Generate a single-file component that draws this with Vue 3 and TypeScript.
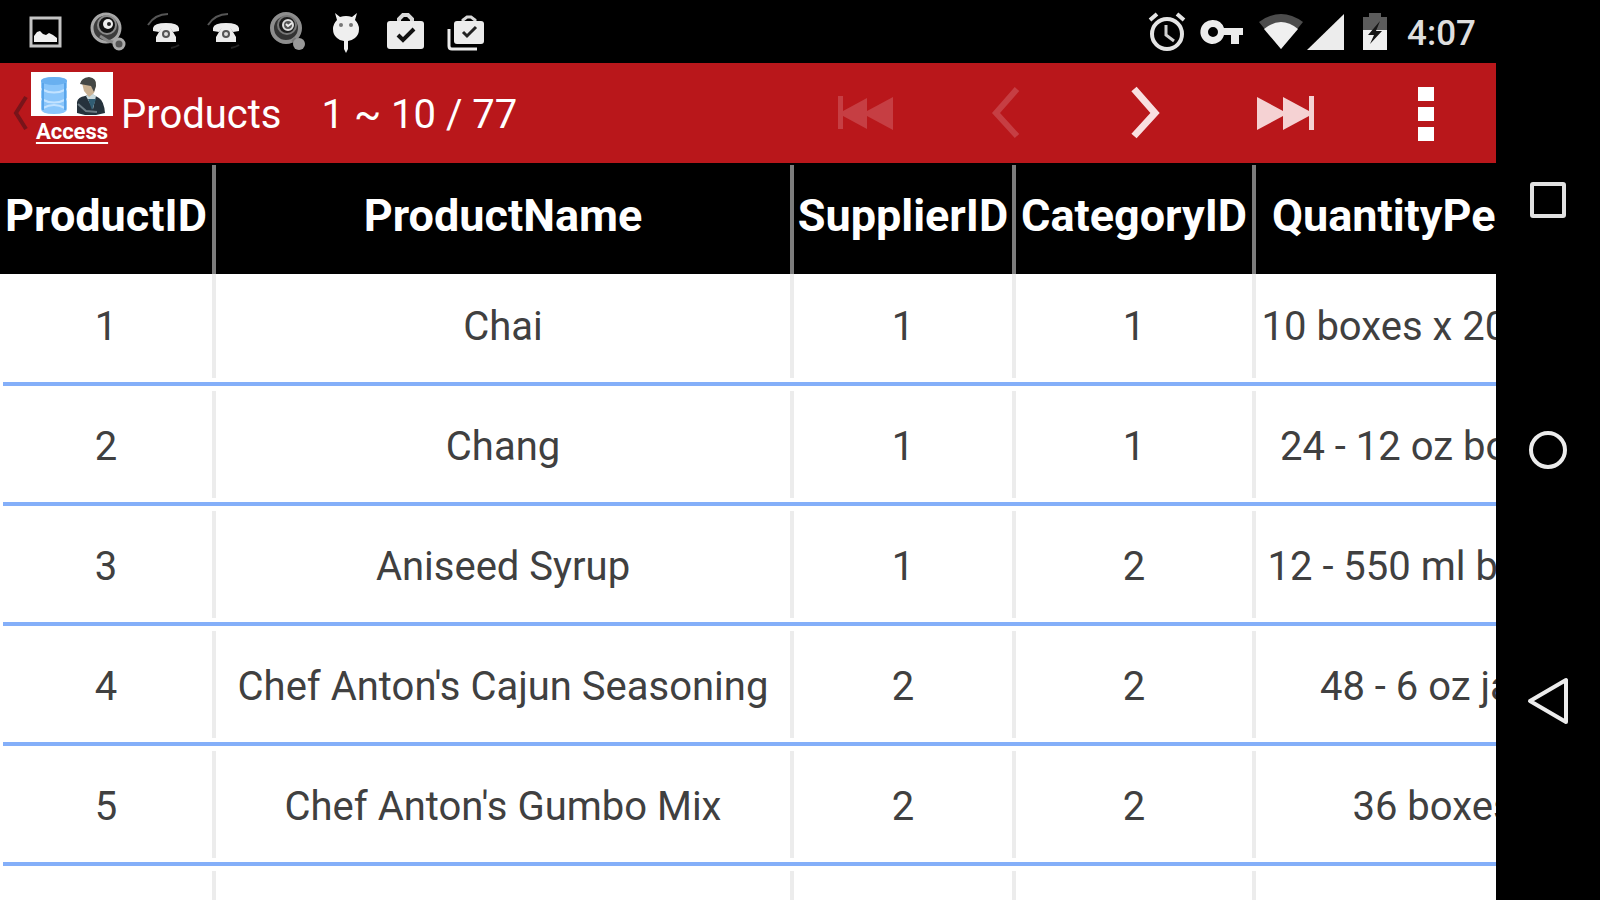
<script setup lang="ts">
interface Product {
  id: string
  name: string
  supplier: string
  category: string
  quantity: string
}

const columns: string[] = ['ProductID', 'ProductName', 'SupplierID', 'CategoryID', 'QuantityPerUnit']

const products: Product[] = [
  { id: '1', name: 'Chai', supplier: '1', category: '1', quantity: '10 boxes x 20 bags' },
  { id: '2', name: 'Chang', supplier: '1', category: '1', quantity: '24 - 12 oz bottles' },
  { id: '3', name: 'Aniseed Syrup', supplier: '1', category: '2', quantity: '12 - 550 ml bottles' },
  { id: '4', name: "Chef Anton's Cajun Seasoning", supplier: '2', category: '2', quantity: '48 - 6 oz jars' },
  { id: '5', name: "Chef Anton's Gumbo Mix", supplier: '2', category: '2', quantity: '36 boxes' },
  { id: '', name: '', supplier: '', category: '', quantity: '' },
]
</script>

<template>
  <div class="device">
    <div class="screen">
      <header class="status">
        <div class="notifications">
          <svg width="60" height="62" viewBox="0 0 60 62">
            <rect x="16" y="18" width="29" height="28" fill="none" stroke="#c4c4c4" stroke-width="3" />
            <path d="M19 42V36l3-4 3-1 3 3 3 1 3-2 4 2 4 3v4z" fill="#f0f0f0" />
          </svg>
          <svg width="60" height="62" viewBox="0 0 60 62">
            <circle cx="31" cy="28" r="14" fill="#3c3c3c" stroke="#a8a8a8" stroke-width="3" />
            <circle cx="32" cy="25" r="9" fill="#111" stroke="#8a8a8a" stroke-width="2" />
            <circle cx="33" cy="24" r="5" fill="#eee" />
            <circle cx="34" cy="24" r="2" fill="#222" />
            <path d="M25 36l8 5 9 2" fill="none" stroke="#888" stroke-width="3" />
            <circle cx="44" cy="44" r="5" fill="#555" stroke="#aaa" stroke-width="3" />
          </svg>
          <svg v-for="n in 2" :key="n" width="60" height="62" viewBox="0 0 60 62">
            <path d="M13 25q7-11 20-11" fill="none" stroke="#555" stroke-width="2" />
            <path d="M18 31v-3q1-5 13-5t13 5v3l-6 1-3-4h-8l-3 4z" fill="#ececec" />
            <path d="M27 27h8l6 10v5H21v-5z" fill="#ececec" />
            <circle cx="31" cy="34" r="4" fill="#555" />
            <circle cx="31" cy="34" r="2" fill="#ddd" />
            <path d="M36 48q5-1 8-3" fill="none" stroke="#222" stroke-width="2" />
          </svg>
          <svg width="60" height="62" viewBox="0 0 60 62">
            <circle cx="31" cy="28" r="14" fill="#333" stroke="#8e8e8e" stroke-width="4" />
            <circle cx="32" cy="25" r="9" fill="#1c1c1c" stroke="#777" stroke-width="2" />
            <circle cx="33" cy="25" r="5" fill="#555" stroke="#ddd" stroke-width="2" />
            <path d="M31 24l2 2 4-3" fill="none" stroke="#eee" stroke-width="2" />
            <path d="M38 39l4 4" stroke="#777" stroke-width="5" />
            <circle cx="44" cy="44" r="6" fill="#999" />
          </svg>
          <svg width="60" height="62" viewBox="0 0 60 62">
            <path d="M20 13l5 4q6-2 12 0l5-4-2 7q4 4 4 9 0 6-4 9-4 3-7 3v8l-2 4-2-4v-8q-4 0-7-3-4-3-4-9 0-5 4-9z" fill="#efefef" />
            <circle cx="26" cy="25" r="2" fill="#777" />
            <circle cx="36" cy="25" r="2" fill="#777" />
          </svg>
          <svg width="60" height="62" viewBox="0 0 60 62">
            <path d="M24 22v-3l4-4h5l4 4v3" fill="none" stroke="#d8d8d8" stroke-width="4" />
            <rect x="12" y="21" width="37" height="28" rx="3" fill="#ececec" />
            <path d="M23 35l5 5 11-11" fill="none" stroke="#111" stroke-width="4" />
          </svg>
          <svg width="60" height="62" viewBox="0 0 60 62">
            <path d="M14 29v17q0 3 3 3h25" fill="none" stroke="#ececec" stroke-width="3" />
            <path d="M28 23v-3l4-3h4l4 3v3" fill="none" stroke="#d8d8d8" stroke-width="3" />
            <rect x="19" y="21" width="30" height="23" rx="3" fill="#ececec" />
            <path d="M28 32l4 4 9-9" fill="none" stroke="#222" stroke-width="3" />
          </svg>
        </div>
        <div class="system">
          <svg width="52" height="62" viewBox="0 0 52 62">
            <circle cx="26" cy="34" r="15" fill="none" stroke="#e4e4e4" stroke-width="4" />
            <path d="M9 20l7-6M43 20l-7-6" stroke="#e4e4e4" stroke-width="4" />
            <path d="M25 25v10l8 6" fill="none" stroke="#d0d0d0" stroke-width="3" />
          </svg>
          <svg width="58" height="62" viewBox="0 0 58 62">
            <path fill-rule="evenodd" d="M20 20a12 12 0 0 1 11 8h19v7h-4v9h-8v-9h-7a12 12 0 1 1-11-15zm0 7a5 5 0 1 0 0 10 5 5 0 0 0 0-10z" fill="#ececec" />
          </svg>
          <svg width="54" height="62" viewBox="0 0 54 62">
            <path d="M8 22q22-16 44 0L30 49z" fill="#4c4c4c" />
            <path d="M13 29q17-14 34 0L30 49z" fill="#f0f0f0" />
          </svg>
          <svg width="48" height="62" viewBox="0 0 48 62">
            <path d="M2 50L39 14v36z" fill="#ececec" />
          </svg>
          <svg width="44" height="62" viewBox="0 0 44 62">
            <path d="M10 17h6v-4h12v4h6v13H10z" fill="#5c5c5c" />
            <path d="M10 30h24v20H10z" fill="#f0f0f0" />
            <path d="M27 21L15 35h6l-4 9 12-13h-6z" fill="#161616" />
          </svg>
          <time class="clock">4:07</time>
        </div>
      </header>

      <div class="toolbar">
        <button class="home" type="button" aria-label="Back">
          <svg class="up" width="18" height="40" viewBox="0 0 18 40">
            <path d="M15 4L5 20l10 16" fill="none" stroke="#78141a" stroke-width="4" />
          </svg>
          <span class="logo">
            <svg width="82" height="44" viewBox="0 0 82 44">
              <rect width="82" height="44" fill="#fff" />
              <path d="M10 9q0-4 13-4t13 4v28q0 5-13 5t-13-5z" fill="#8ac6fb" />
              <ellipse cx="23" cy="9" rx="13" ry="4" fill="#69b0f0" />
              <path d="M10 17q13 7 26 0M10 27q13 7 26 0M12 36q11-6 22 0" fill="none" stroke="#c2e2ff" stroke-width="2" />
              <path d="M12 11v27M34 11v27" stroke="#5aa5ea" stroke-width="2" />
              <path d="M46 41V30q1-5 8-6l7-2 7 4q5 3 6 15l-9 2H54z" fill="#26323c" />
              <path d="M55 24l5-3 5 3-3 13z" fill="#c8d8dc" />
              <path d="M57 27l4 11 4-11z" fill="#315d73" />
              <path d="M51 11q3-5 8-5 6 1 6 7l-2 8-5 4-5-6z" fill="#c9b193" />
              <path d="M49 12q1-6 9-7 8 1 7 9l-2 6-3-6z" fill="#444745" />
              <path d="M47 32l8 7 11 1" stroke="#6d7b83" stroke-width="2" fill="none" />
            </svg>
            <span class="logo-name">Access</span>
          </span>
        </button>
        <h1 class="title">Products</h1>
        <span class="range">1 ~ 10 / 77</span>
        <nav class="actions">
          <button type="button" disabled aria-label="First page">
            <svg width="60" height="60" viewBox="0 0 60 60">
              <path d="M2 13h5v15l24-13v13l26-14v33L31 33v13L7 33v13H2z" fill="#c63e43" />
            </svg>
          </button>
          <button type="button" disabled aria-label="Previous page">
            <svg width="60" height="60" viewBox="0 0 60 60">
              <path d="M41 6L20 30l21 23" fill="none" stroke="#c63e43" stroke-width="6" />
            </svg>
          </button>
          <button type="button" aria-label="Next page">
            <svg width="60" height="60" viewBox="0 0 60 60">
              <path d="M18 6l21 24-21 23" fill="none" stroke="#f9dfe0" stroke-width="7" />
            </svg>
          </button>
          <button type="button" aria-label="Last page">
            <svg width="60" height="60" viewBox="0 0 60 60">
              <path d="M58 13h-5v15L27 14v14L1 14v33l26-14v14l26-14v14h5z" fill="#f5d2d3" />
            </svg>
          </button>
          <button type="button" aria-label="More options">
            <svg width="60" height="60" viewBox="0 0 60 60">
              <path d="M22 4h16v14H22zM22 24h16v14H22zM22 44h16v14H22z" fill="#fff" />
            </svg>
          </button>
        </nav>
      </div>

      <main class="viewport">
        <table class="grid">
          <colgroup>
            <col class="col-id" />
            <col class="col-name" />
            <col class="col-supplier" />
            <col class="col-category" />
            <col class="col-quantity" />
          </colgroup>
          <thead>
            <tr>
              <th v-for="c in columns" :key="c" scope="col"><div class="cell">{{ c }}</div></th>
            </tr>
          </thead>
          <tbody>
            <tr v-for="(p, i) in products" :key="i">
              <td><div class="cell">{{ p.id }}</div></td>
              <td><div class="cell">{{ p.name }}</div></td>
              <td><div class="cell">{{ p.supplier }}</div></td>
              <td><div class="cell">{{ p.category }}</div></td>
              <td><div class="cell">{{ p.quantity }}</div></td>
            </tr>
          </tbody>
        </table>
      </main>
    </div>

    <nav class="softkeys">
      <button type="button" aria-label="Recent apps">
        <svg width="48" height="56" viewBox="0 0 48 56">
          <rect x="8" y="12" width="32" height="32" rx="1" fill="none" stroke="#e2e2e2" stroke-width="4" />
        </svg>
      </button>
      <button type="button" aria-label="Home">
        <svg width="48" height="56" viewBox="0 0 48 56">
          <circle cx="24" cy="28" r="17" fill="none" stroke="#ececec" stroke-width="4" />
        </svg>
      </button>
      <button type="button" aria-label="Go back">
        <svg width="48" height="56" viewBox="0 0 48 56">
          <path d="M42 8v42L6 29z" fill="none" stroke="#ececec" stroke-width="4" stroke-linejoin="round" />
        </svg>
      </button>
    </nav>
  </div>
</template>

<style>
body {
  margin: 0;
  background: #000;
}
</style>

<style scoped>
.device {
  display: flex;
  height: 100vh;
  overflow: hidden;
  background: #000;
  font-family: Roboto, "Liberation Sans", sans-serif;
}

.screen {
  flex: 1;
  min-width: 0;
  display: flex;
  flex-direction: column;
}

svg {
  display: block;
  flex: none;
}

button {
  margin: 0;
  padding: 0;
  border: 0;
  background: none;
  font: inherit;
  color: inherit;
}

.status {
  display: flex;
  justify-content: space-between;
  height: 63px;
  flex: none;
  padding: 0 20px 0 15px;
}

.notifications,
.system {
  display: flex;
}

.clock {
  margin-left: 10px;
  font-size: 35px;
  line-height: 68px;
  font-weight: 500;
  color: #dedede;
}

.toolbar {
  display: flex;
  align-items: center;
  height: 100px;
  flex: none;
  background: #b9171b;
  color: #fff;
  font-size: 40px;
  line-height: 48px;
}

.home {
  display: flex;
  align-items: center;
  padding-left: 11px;
}

.logo {
  display: flex;
  flex-direction: column;
  align-items: center;
  margin-left: 2px;
  padding-bottom: 6px;
}

.logo-name {
  font-size: 22px;
  line-height: 32px;
  font-weight: 700;
  text-decoration: underline;
  text-decoration-thickness: 2px;
  text-underline-offset: 3px;
}

.title {
  margin: 0 0 0 8px;
  padding-top: 4px;
  font: inherit;
}

.range {
  margin-left: 40px;
  padding-top: 4px;
  white-space: nowrap;
}

.actions {
  display: flex;
  margin-left: auto;
}

.actions button {
  display: flex;
  justify-content: center;
  width: 140px;
}

.viewport {
  flex: 1;
  min-height: 0;
  overflow: hidden;
  background: #fff;
}

.grid {
  width: 1614px;
  table-layout: fixed;
  border-collapse: collapse;
}

.col-id {
  width: 216px;
}

.col-name {
  width: 578px;
}

.col-supplier {
  width: 222px;
}

.col-category {
  width: 240px;
}

.col-quantity {
  width: 358px;
}

th,
td {
  padding: 0;
}

.cell {
  display: flex;
  align-items: center;
  justify-content: center;
  box-sizing: border-box;
  white-space: nowrap;
  border-right: 4px solid #ececec;
}

th {
  padding-top: 2px;
  background: #000;
  color: #fff;
}

th .cell {
  height: 109px;
  padding-bottom: 8px;
  border-color: #7c7c7c;
  font-size: 45px;
  font-weight: 700;
}

td {
  padding: 5px 0 8px;
  background: linear-gradient(#84aff9, #84aff9) right bottom / 100% 4px no-repeat;
}

td:first-child {
  background-size: calc(100% - 3px) 4px;
}

tbody tr:first-child td {
  padding-top: 0;
}

td .cell {
  height: 107px;
  padding-top: 4px;
  font-size: 40px;
  color: #404040;
}

tbody tr:first-child .cell {
  height: 104px;
  padding-top: 0;
}

.softkeys {
  display: flex;
  flex-direction: column;
  flex: none;
  width: 104px;
  padding: 75px 0;
  box-sizing: border-box;
}

.softkeys button {
  display: flex;
  flex: 1;
  align-items: center;
  justify-content: center;
}
</style>
